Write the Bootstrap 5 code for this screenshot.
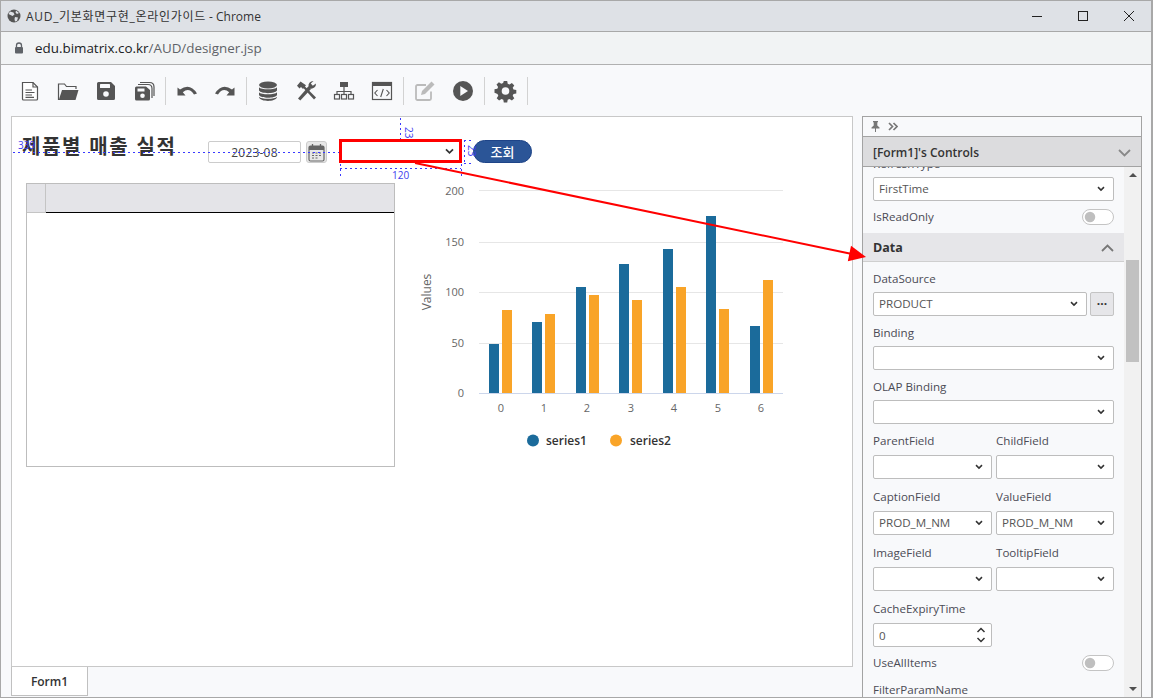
<!DOCTYPE html>
<html lang="ko">
<head>
<meta charset="utf-8">
<title>AUD_기본화면구현_온라인가이드 - Chrome</title>
<link href="https://cdn.jsdelivr.net/npm/bootstrap@5.3.0/dist/css/bootstrap.min.css" rel="stylesheet">
<style>
html,body{margin:0;height:698px;overflow:hidden;background:#f8f9fb}
body{font-family:"Open Sans","Noto Sans CJK KR",sans-serif;font-size:12px;color:#444}
.win{width:1153px;height:698px;border:1px solid #a8a8a8;border-right-width:2px;position:relative;overflow:hidden}
.win-title{height:31px;background:#dee1e6;border-bottom:1px solid #a8a8a8;padding-left:6px;color:#333}
.win-title .ttl{font-size:12px;margin-left:5px;margin-top:2px}
.ttl-k{letter-spacing:.7px}
.winctl{margin-right:-1px;margin-top:-1px}
.winbtn{width:46px;height:30px}
.win-url{height:33px;background:#f1f3f4;border-bottom:1px solid #b0b0b0;padding-left:13px;font-size:13.4px;color:#202124}
.win-url .pth{color:#5f6368}
.url-txt{margin-left:7px;margin-top:1px}
.tbar{height:51px;background:#f8f9fb;padding-left:10px}
.tb{width:38px;height:36px}
.tb-sep{width:1px;height:28px;background:#d2d2d2;margin:0 2px}
.work{height:581px;padding-left:10px}
.leftcol{width:842px}
.dz{height:551px;width:842px;background:#fff;border:1px solid #c8c8c8;position:relative}
.tabs{height:29px}
.tabitem{width:77px;height:29px;padding-top:1px;background:#fff;border:1px solid #c0c0c0;border-top:0;font-weight:600;font-size:12px;color:#333}
.dz-title{position:absolute;left:10px;top:15px;font-family:"Noto Sans CJK KR",sans-serif;font-weight:700;font-size:20px;letter-spacing:1.6px;color:#333;line-height:28px;white-space:nowrap}
.dz-date{position:absolute;left:196px;top:24px;width:93px;height:22px;border:1px solid #ccc;border-radius:2px;padding:0;font-size:12px;text-align:center;color:#444;background:#fff;letter-spacing:.2px}
.dz-cal{position:absolute;left:294px;top:24px;width:21px;height:22px;padding:0;border:1px solid #ccc;border-radius:3px;background:#e8e8e8}
.dz-sel.form-select{position:absolute;left:327px;top:22px;width:123px;height:24px;min-height:0;padding:0 20px 0 4px;border:3px solid #f00;border-radius:0;background-image:url("data:image/svg+xml,%3csvg xmlns='http://www.w3.org/2000/svg' viewBox='0 0 10 8'%3e%3cpath d='M1 1.500 5 5.500 9 1.500' fill='none' stroke='%23333' stroke-width='2'/%3e%3c/svg%3e");background-position:right 5px center;background-size:9px 7px}
.dz-go.btn{position:absolute;left:461px;top:23px;width:59px;height:23px;padding:0;background:#2b5597;border:1px solid #1e4488;border-radius:12px;color:#fff;font-size:13px;font-weight:500;line-height:20px;font-family:"Noto Sans CJK KR",sans-serif}
.dz-grid{position:absolute;left:14px;top:66px;width:369px;height:284px;border:1px solid #bdbdbd;background:#fff}
.dz-ghead{height:29px;background:#e4e4e8}
.dz-gcorner{width:19px;height:29px;border-right:1px solid #c4c4c4;border-bottom:1px solid #c4c4c4}
.dz-gbar{flex:1;height:29px;border-bottom:1.5px solid #000}
.dz-chart{position:absolute;left:398px;top:53px}
.dz-guides{position:absolute;left:0;top:0;pointer-events:none}
.cx{font-family:"Open Sans",sans-serif;font-size:11px;fill:#666}
.cy{font-family:"Open Sans",sans-serif;font-size:12px;fill:#666}
.lg{font-family:"Open Sans",sans-serif;font-size:12px;font-weight:600;fill:#333}
.gt{font-family:"Open Sans",sans-serif;font-size:10px;fill:#4040ee}
.panel{width:280px;height:581px;margin-left:9px;border:1px solid #a3a3a3;border-bottom:0;background:#f8f9fb;overflow:hidden}
.p-tools{height:20px;border-bottom:1px solid #a3a3a3;padding-left:8px}
.p-head{height:30px;background:#dcdcde;border-bottom:1px solid #a3a3a3;padding:2px 10px 0 10px;font-size:12px;font-weight:600;color:#333}
.p-wrap{height:530px;overflow:hidden}
.p-body{width:261px;height:530px;overflow:hidden}
.p-sec{padding:0 10px}
.p-lbl{height:16px;line-height:16px;margin-bottom:6px;font-size:11.6px;color:#4b4b55;white-space:nowrap}
.p-f{margin-bottom:10px}
.p-f.tight{margin-bottom:8px}
.p-f.tight .p-lbl{margin-bottom:5px}
.p-f.t9{margin-bottom:9px}
.p-f.t9 .p-lbl{margin-bottom:5px}
.p-tog{height:16px;margin-bottom:8px;font-size:11.6px;color:#4b4b55}
.p-tog .form-check-input{width:32px;height:16px;margin:0;float:none;border-color:#c4c4c4;box-shadow:none}
.form-check.form-switch.p-sw{min-height:0;padding:0;margin:0;display:flex}
.p-sel.form-select,.p-num.form-control{height:24px;min-height:0;padding:0 20px 0 5px;font-size:11.6px;line-height:22px;color:#555;border:1px solid #bdbdbd;border-radius:2px;box-shadow:none}
.p-sel.form-select{background-image:url("data:image/svg+xml,%3csvg xmlns='http://www.w3.org/2000/svg' viewBox='0 0 10 8'%3e%3cpath d='M1 1.500 5 5.500 9 1.500' fill='none' stroke='%23333' stroke-width='2'/%3e%3c/svg%3e");background-position:right 8px center;background-size:8px 6px}
.p-half{width:119px;flex-shrink:0}
.p-pair{gap:4px}
.p-more.btn{width:24px;height:24px;padding:0;margin-left:3px;background:#e6e6e9;border:1px solid #c4c4c4;border-radius:2px;line-height:18px;color:#333;font-weight:700;font-size:12px}
.p-sec-h{height:29px;background:#e6e6e9;border-bottom:1px solid #cfcfcf;padding:2px 10px 0;font-size:12.5px;font-weight:700;color:#333;margin-bottom:9px}
.p-spin{position:absolute;right:6px;top:4px}
.sbar{width:17px;height:530px;background:#f1f1f1;position:relative}
.sthumb{position:absolute;left:2px;top:93px;width:13px;height:102px;background:#c1c1c1}
.sup,.sdn{position:absolute;left:5px;width:0;height:0;border-left:4px solid transparent;border-right:4px solid transparent}
.sup{top:6px;border-bottom:4px solid #505050}
.sdn{bottom:6px;border-top:4px solid #505050}
.arrow-ov{position:absolute;left:-1px;top:-1px;pointer-events:none}
.first-f{margin-top:-11px}
.p-f.cache-f{margin-bottom:8px}
.use-row{margin-bottom:11px}
</style>
</head>
<body>
<div class="win">
  <div class="win-title d-flex align-items-center">
    <svg width="14" height="14" viewBox="0 0 14 14"><circle cx="7" cy="7" r="6.500" fill="#555"/><path d="M3 2.500 6.500 3.500 7.500 5.500 5.500 7 3.500 6 1.500 5ZM8 8 11 8.500 10 12 8 12.500 7.500 10ZM9 1.500 12 4 10 5 8.500 3.500Z" fill="#dee1e6"/></svg>
    <span class="ttl"><span class="ttl-k">AUD_기본화면구현_온라인가이드</span> - Chrome</span>
    <div class="ms-auto d-flex winctl">
      <div class="winbtn d-flex align-items-center justify-content-center"><svg width="12" height="12" viewBox="0 0 12 12"><path d="M1 6.500H11" stroke="#222" stroke-width="1"/></svg></div>
      <div class="winbtn d-flex align-items-center justify-content-center"><svg width="12" height="12" viewBox="0 0 12 12"><rect x="1.500" y="1.500" width="9" height="9" fill="none" stroke="#222"/></svg></div>
      <div class="winbtn d-flex align-items-center justify-content-center"><svg width="12" height="12" viewBox="0 0 12 12"><path d="M1 1 11 11M11 1 1 11" stroke="#222" stroke-width="1"/></svg></div>
    </div>
  </div>
  <div class="win-url d-flex align-items-center">
    <svg width="10" height="12" viewBox="0 0 10 12"><path d="M2.500 5V3.500a2.500 2.500 0 0 1 5 0V5" fill="none" stroke="#5f6368" stroke-width="1.300"/><rect x="1" y="5" width="8" height="6.500" rx="1" fill="#5f6368"/></svg>
    <span class="url-txt ps-1"><span>edu.bimatrix.co.kr</span><span class="pth">/AUD/designer.jsp</span></span>
  </div>
  <div class="tbar d-flex align-items-center">
    <div class="tb d-flex align-items-center justify-content-center"><svg width="24" height="24" viewBox="0 0 24 24"><path d="M4.500 3.500H15L19.500 8V20a1 1 0 0 1-1 1H5.500a1 1 0 0 1-1-1Z" fill="#fff" stroke="#555" stroke-width="1.200"/><path d="M15 3.500V8h4.500" fill="none" stroke="#555" stroke-width="1.200"/><path d="M7.500 11H14M7.500 13.500H16.500M7.500 16H14M7.500 18.300H16" stroke="#555" stroke-width="1.200"/></svg></div>
    <div class="tb d-flex align-items-center justify-content-center"><svg width="24" height="24" viewBox="0 0 24 24"><path d="M2.500 21V5h6l2 2.500h9.500V10" fill="none" stroke="#555" stroke-width="1.200"/><path d="M6 11H22.500L19.500 21H2.800Z" fill="#555"/></svg></div>
    <div class="tb d-flex align-items-center justify-content-center"><svg width="24" height="24" viewBox="0 0 24 24"><path d="M4.500 3H17L21 7V19.500A1.500 1.500 0 0 1 19.500 21H4.500A1.500 1.500 0 0 1 3 19.500V4.500A1.500 1.500 0 0 1 4.500 3Z" fill="#555"/><rect x="6" y="5" width="10" height="4" rx=".5" fill="#f8f9fb"/><circle cx="12" cy="15" r="2.800" fill="#f8f9fb"/></svg></div>
    <div class="tb d-flex align-items-center justify-content-center"><svg width="24" height="24" viewBox="0 0 24 24"><path d="M8 3.500H17.500Q22 3.500 22 8V17" fill="none" stroke="#555" stroke-width="1.200"/><path d="M6 5.500H16Q20 5.500 20 9.500V19" fill="none" stroke="#555" stroke-width="1.200"/><path d="M4.500 7.500H14L18 11V20a1.500 1.500 0 0 1-1.500 1.500H4.500A1.500 1.500 0 0 1 3 20V9A1.500 1.500 0 0 1 4.500 7.500Z" fill="#555"/><rect x="5.500" y="9.500" width="7" height="3" fill="#f8f9fb"/><circle cx="10.500" cy="16.800" r="2.300" fill="#f8f9fb"/></svg></div>
    <div class="tb-sep"></div>
    <div class="tb d-flex align-items-center justify-content-center"><svg width="24" height="24" viewBox="0 0 24 24"><path d="M2.500 8.500V16.500H10.500L7.800 13.300Q14 7.800 19 15.500L22 14.500Q15 3.500 5 10.500Z" fill="#555"/></svg></div>
    <div class="tb d-flex align-items-center justify-content-center"><svg width="24" height="24" viewBox="0 0 24 24"><g transform="matrix(-1 0 0 1 24 0)"><path d="M2.500 8.500V16.500H10.500L7.800 13.300Q14 7.800 19 15.500L22 14.500Q15 3.500 5 10.500Z" fill="#555"/></g></svg></div>
    <div class="tb-sep"></div>
    <div class="tb d-flex align-items-center justify-content-center"><svg width="24" height="24" viewBox="0 0 24 24"><ellipse cx="12" cy="6" rx="9" ry="3.500" fill="#555"/><path d="M3 8.300C5 11 19 11 21 8.300V11.500C19 15 5 15 3 11.500Z" fill="#555"/><path d="M3 13.300C5 16 19 16 21 13.300V16C19 19.700 5 19.700 3 16Z" fill="#555"/><path d="M3 17.800C5 20.500 19 20.500 21 17.800V18.500C19 23 5 23 3 18.500Z" fill="#555"/></svg></div>
    <div class="tb d-flex align-items-center justify-content-center"><svg width="24" height="24" viewBox="0 0 24 24"><path d="M4 19.500 14.500 7.500 17 10 6.300 21.500Z" fill="#555"/><path d="M20 20.500 8 7.500 9.500 6 22 18.500Z" fill="#555"/><path d="M3 6.800 6.500 2.500 12 6.200 9 10 7 8 5.500 9.500Z" fill="#555"/><path d="M22 4.500A4.800 4.800 0 0 1 16 9.500L13.500 12 11.800 10.300 14.500 7.500A4.800 4.800 0 0 1 19.500 2L16.800 4.600 18.800 6.800Z" fill="#555"/></svg></div>
    <div class="tb d-flex align-items-center justify-content-center"><svg width="24" height="24" viewBox="0 0 24 24"><rect x="8" y="3" width="8" height="5" fill="#555"/><path d="M12 8V15M5 15V12.500H19V15" fill="none" stroke="#555" stroke-width="1.200"/><rect x="2.500" y="15.500" width="5" height="4.500" fill="none" stroke="#555" stroke-width="1.200"/><rect x="9.500" y="15.500" width="5" height="4.500" fill="none" stroke="#555" stroke-width="1.200"/><rect x="16.500" y="15.500" width="5" height="4.500" fill="none" stroke="#555" stroke-width="1.200"/></svg></div>
    <div class="tb d-flex align-items-center justify-content-center"><svg width="24" height="24" viewBox="0 0 24 24"><rect x="2.500" y="3.500" width="19" height="17" fill="none" stroke="#555" stroke-width="1.200"/><rect x="2.500" y="3.500" width="19" height="3.500" fill="#555"/><path d="M7.500 11 4.800 14 7.500 17M16.500 11 19.200 14 16.500 17M13.300 10 10.700 18" fill="none" stroke="#555" stroke-width="1.100"/></svg></div>
    <div class="tb-sep"></div>
    <div class="tb d-flex align-items-center justify-content-center"><svg width="24" height="24" viewBox="0 0 24 24"><path d="M18 12.500V19.500A1.500 1.500 0 0 1 16.500 21H4.500A1.500 1.500 0 0 1 3 19.500V7.500A1.500 1.500 0 0 1 4.500 6H13" fill="none" stroke="#bbb" stroke-width="1.800"/><path d="M8 16 9 12 18.500 2.500 21.500 5.500 12 15Z" fill="#bbb"/></svg></div>
    <div class="tb d-flex align-items-center justify-content-center"><svg width="24" height="24" viewBox="0 0 24 24"><circle cx="12" cy="12" r="10" fill="#555"/><path d="M9.300 7 17 12 9.300 17Z" fill="#f8f9fb"/></svg></div>
    <div class="tb-sep"></div>
    <div class="tb d-flex align-items-center justify-content-center"><svg width="24" height="24" viewBox="0 0 24 24"><path d="M10.300 2h3.400l.5 2.800 1.800.8 2.400-1.600 2.400 2.400-1.600 2.400.8 1.800 2.800.5v3.400l-2.800.5-.8 1.800 1.600 2.400-2.400 2.400-2.400-1.600-1.800.8-.5 2.800h-3.400l-.5-2.800-1.800-.8-2.400 1.600-2.400-2.400 1.600-2.400-.8-1.800L1 13.700v-3.400l2.800-.5.8-1.800L3 5.600 5.400 3.200l2.400 1.600 1.800-.8Z" fill="#555" transform="translate(-.5 0)"/><circle cx="11.500" cy="12" r="3.800" fill="#f8f9fb"/></svg></div>
    <div class="tb-sep"></div>
  </div>
  <div class="work d-flex">
    <div class="leftcol">
      <div class="dz">
        <div class="dz-title">제품별 매출 실적</div>
        <input class="dz-date" type="text" value="2023-08" aria-label="date">
        <button class="dz-cal btn d-flex align-items-center justify-content-center" type="button" aria-label="calendar"><svg width="17" height="19" viewBox="0 0 17 19"><rect x="1" y="3" width="15" height="15" rx="1.500" fill="none" stroke="#666" stroke-width="1.200"/><rect x="1" y="3" width="15" height="4" fill="#666"/><path d="M4.500 1V4M12.500 1V4" stroke="#666" stroke-width="1.300"/><path d="M4 10H6M7.500 10H9.500M11 10H13M4 12.500H6M7.500 12.500H9.500M11 12.500H13M4 15H6M7.500 15H9.500" stroke="#666"/></svg></button>
        <select class="dz-sel form-select" aria-label="combo"><option></option></select>
        <button class="dz-go btn" type="button">조회</button>
        <div class="dz-grid">
          <div class="dz-ghead d-flex"><div class="dz-gcorner"></div><div class="dz-gbar"></div></div>
        </div>
        <svg class="dz-chart" width="400" height="300" viewBox="410 170 400 300">
          <g stroke="#e6e6e6" stroke-width="1"><path d="M479 190.500H783M479 242.500H783M479 292.500H783M479 343.500H783"/></g>
          <path d="M479 393.500H783" stroke="#ccd6eb"/>
          <g fill="#1b6b9b">
            <rect x="489" y="344" width="10" height="49"/><rect x="532" y="322" width="10" height="71"/><rect x="576" y="287" width="10" height="106"/><rect x="619" y="264" width="10" height="129"/><rect x="663" y="249" width="10" height="144"/><rect x="706" y="216" width="10" height="177"/><rect x="750" y="326" width="10" height="67"/>
          </g>
          <g fill="#f9a428">
            <rect x="502" y="310" width="10" height="83"/><rect x="545" y="314" width="10" height="79"/><rect x="589" y="295" width="10" height="98"/><rect x="632" y="300" width="10" height="93"/><rect x="676" y="287" width="10" height="106"/><rect x="719" y="309" width="10" height="84"/><rect x="763" y="280" width="10" height="113"/>
          </g>
          <g class="cx" text-anchor="end"><text x="464" y="195">200</text><text x="464" y="246">150</text><text x="464" y="296">100</text><text x="464" y="347">50</text><text x="464" y="397">0</text></g>
          <g class="cx" text-anchor="middle"><text x="501" y="412">0</text><text x="544" y="412">1</text><text x="587" y="412">2</text><text x="631" y="412">3</text><text x="674" y="412">4</text><text x="718" y="412">5</text><text x="761" y="412">6</text></g>
          <text class="cy" text-anchor="middle" transform="translate(431 292) rotate(-90)">Values</text>
          <circle cx="533" cy="440.500" r="6" fill="#1b6b9b"/><text class="lg" x="546" y="445">series1</text>
          <circle cx="616" cy="440.500" r="6" fill="#f9a428"/><text class="lg" x="630" y="445">series2</text>
        </svg>
        <svg class="dz-guides" width="840" height="549" viewBox="12 117 840 549">
          <g stroke="#3a3aff" stroke-width="1" stroke-dasharray="2 3" fill="none">
            <path d="M13 152.500H339M400.500 118V139M340.500 164V179M461.500 164V179M340 168.500H461M464.500 140V163M464 140.500H473M464 163.500H473"/>
          </g>
          <text class="gt" x="18" y="149">339</text>
          <text class="gt" transform="translate(405 127) rotate(90)">23</text>
          <text class="gt" x="392" y="179">120</text>
          <text class="gt" transform="translate(468 145) rotate(90)">23</text>
        </svg>
      </div>
      <div class="tabs d-flex"><div class="tabitem d-flex align-items-center justify-content-center">Form1</div></div>
    </div>
    <div class="panel">
      <div class="p-tools d-flex align-items-center gap-2">
        <svg width="9" height="11" viewBox="0 0 9 11"><path d="M2 0H7V1L6.300 1.500V4.500L8.500 6.500V7.500H5V11H4V7.500H.5V6.500L2.700 4.500V1.500L2 1Z" fill="#777"/></svg>
        <svg width="10" height="9" viewBox="0 0 10 9"><path d="M1 1 4.500 4.500 1 8M5.500 1 9 4.500 5.500 8" fill="none" stroke="#777" stroke-width="1.700"/></svg>
      </div>
      <div class="p-head d-flex align-items-center justify-content-between">
        <span>[Form1]'s Controls</span>
        <svg width="13" height="8" viewBox="0 0 13 8"><path d="M1 1 6.500 6.500 12 1" fill="none" stroke="#888" stroke-width="1.800"/></svg>
      </div>
      <div class="p-wrap d-flex">
        <div class="p-body">
          <div class="p-sec">
            <div class="p-f tight first-f">
              <div class="p-lbl">RefreshType</div>
              <select class="p-sel form-select" aria-label="RefreshType"><option>FirstTime</option></select>
            </div>
            <div class="p-tog d-flex align-items-center justify-content-between"><span>IsReadOnly</span><div class="form-check form-switch p-sw"><input class="form-check-input" type="checkbox" role="switch" aria-label="IsReadOnly"></div></div>
          </div>
          <div class="p-sec-h d-flex align-items-center justify-content-between">
            <span>Data</span>
            <svg width="13" height="8" viewBox="0 0 13 8"><path d="M1 7 6.500 1.500 12 7" fill="none" stroke="#777" stroke-width="1.800"/></svg>
          </div>
          <div class="p-sec">
            <div class="p-f t9">
              <div class="p-lbl">DataSource</div>
              <div class="d-flex"><select class="p-sel form-select" aria-label="DataSource"><option>PRODUCT</option></select><button class="p-more btn flex-shrink-0" type="button">···</button></div>
            </div>
            <div class="p-f t9"><div class="p-lbl">Binding</div><select class="p-sel form-select" aria-label="Binding"><option></option></select></div>
            <div class="p-f t9"><div class="p-lbl">OLAP Binding</div><select class="p-sel form-select" aria-label="OLAP Binding"><option></option></select></div>
            <div class="p-f d-flex p-pair">
              <div class="p-half"><div class="p-lbl">ParentField</div><select class="p-sel form-select" aria-label="ParentField"><option></option></select></div>
              <div class="flex-grow-1"><div class="p-lbl">ChildField</div><select class="p-sel form-select" aria-label="ChildField"><option></option></select></div>
            </div>
            <div class="p-f d-flex p-pair">
              <div class="p-half"><div class="p-lbl">CaptionField</div><select class="p-sel form-select" aria-label="CaptionField"><option>PROD_M_NM</option></select></div>
              <div class="flex-grow-1"><div class="p-lbl">ValueField</div><select class="p-sel form-select" aria-label="ValueField"><option>PROD_M_NM</option></select></div>
            </div>
            <div class="p-f d-flex p-pair">
              <div class="p-half"><div class="p-lbl">ImageField</div><select class="p-sel form-select" aria-label="ImageField"><option></option></select></div>
              <div class="flex-grow-1"><div class="p-lbl">TooltipField</div><select class="p-sel form-select" aria-label="TooltipField"><option></option></select></div>
            </div>
            <div class="p-f cache-f">
              <div class="p-lbl">CacheExpiryTime</div>
              <div class="p-half position-relative"><input class="p-num form-control" type="text" value="0" aria-label="CacheExpiryTime">
                <svg class="p-spin" width="10" height="16" viewBox="0 0 10 16"><path d="M1.500 5 5 1.500 8.500 5M1.500 11 5 14.500 8.500 11" fill="none" stroke="#333" stroke-width="1.500"/></svg></div>
            </div>
            <div class="p-tog d-flex align-items-center justify-content-between use-row"><span>UseAllItems</span><div class="form-check form-switch p-sw"><input class="form-check-input" type="checkbox" role="switch" aria-label="UseAllItems"></div></div>
            <div class="p-lbl">FilterParamName</div>
          </div>
        </div>
        <div class="sbar"><div class="sup"></div><div class="sthumb"></div><div class="sdn"></div></div>
      </div>
    </div>
  </div>
  <svg class="arrow-ov" width="1153" height="698" viewBox="0 0 1153 698">
    <path d="M415 163 852 254" stroke="#f00" stroke-width="2" fill="none"/>
    <path d="M866 257 847.800 261.300 851 245.700Z" fill="#f00"/>
  </svg>
</div>
</body>
</html>
